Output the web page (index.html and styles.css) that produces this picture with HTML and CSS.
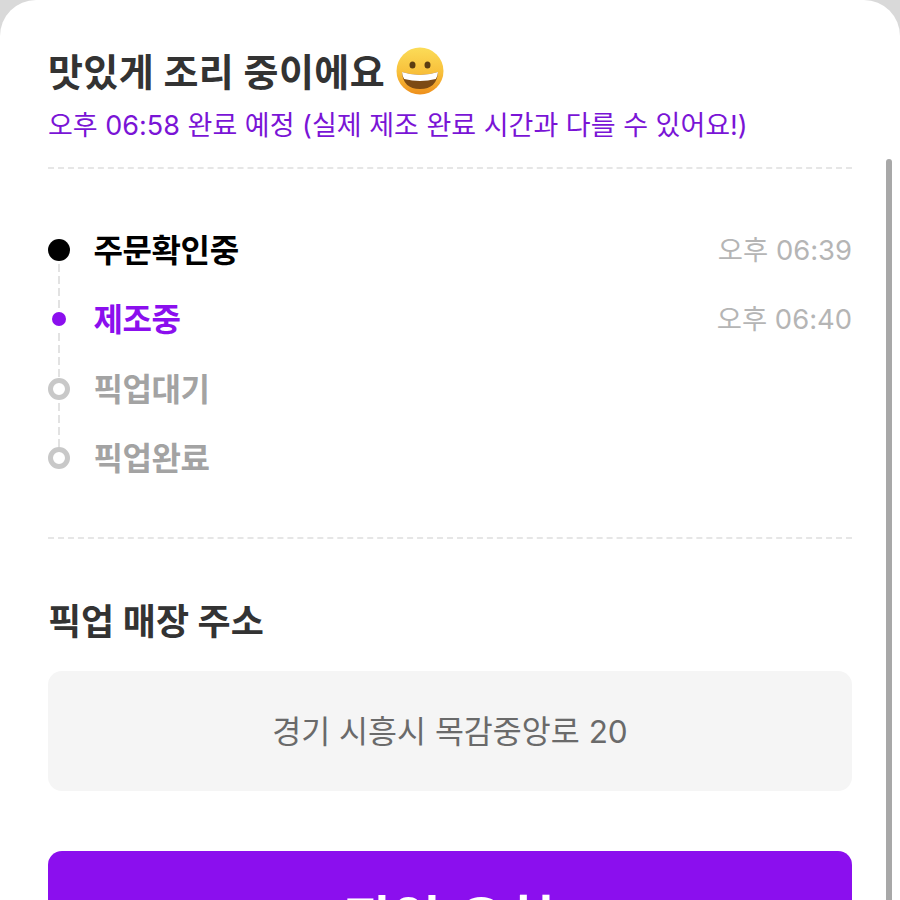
FILE: index.html
```html
<!DOCTYPE html>
<html lang="ko">
<head>
    <meta charset="UTF-8"/>
    <title>주문 상태</title>
    <link rel="stylesheet" href="styles.css">
</head>
<body>
<div class="sheet">
    <div class="scrollbar"></div>

    <h2 class="title">
        맛있게 조리 중이에요
        <svg class="emoji" viewBox="0 0 48 48" aria-hidden="true">
            <defs>
                <linearGradient id="face" x1="0" y1="0" x2="0" y2="1">
                    <stop offset="0" stop-color="#fbdc58"/>
                    <stop offset="0.55" stop-color="#f8bf3a"/>
                    <stop offset="1" stop-color="#ee8f1c"/>
                </linearGradient>
            </defs>
            <circle cx="24" cy="24" r="23.5" fill="url(#face)"/>
            <ellipse cx="16.5" cy="18" rx="3" ry="3.6" fill="#5b3d12"/>
            <ellipse cx="31.5" cy="18" rx="3" ry="3.6" fill="#5b3d12"/>
            <path d="M6 25 Q24 31 42 25 Q41 42 24 42 Q7 42 6 25 Z" fill="#7c4a14"/>
            <path d="M6 25 Q24 31 42 25 Q41.6 29.5 39.8 32 Q24 36 8.2 32 Q6.4 29.5 6 25 Z" fill="#fff"/>
        </svg>
    </h2>
    <p class="eta">오후 06:58 완료 예정 (실제 제조 완료 시간과 다를 수 있어요!)</p>

    <hr class="divider"/>

    <ul class="steps">
        <li class="step step-done">
            <span class="dot"></span>
            <span class="step-name">주문확인중</span>
            <span class="step-time">오후 06:39</span>
        </li>
        <li class="step step-current">
            <span class="dot"></span>
            <span class="step-name">제조중</span>
            <span class="step-time">오후 06:40</span>
        </li>
        <li class="step">
            <span class="dot"></span>
            <span class="step-name">픽업대기</span>
        </li>
        <li class="step">
            <span class="dot"></span>
            <span class="step-name">픽업완료</span>
        </li>
    </ul>

    <hr class="divider"/>

    <h3 class="section-title">픽업 매장 주소</h3>
    <div class="address">경기 시흥시 목감중앙로 20</div>

    <button class="confirm" type="button">픽업 요청</button>
</div>
</body>
</html>
```

FILE: styles.css
```css
html, body {
    height: 100%;
    overflow: hidden;
}

body {
    margin: 0;
    background-color: #d9d9d9;
    font-family: Inter, "Noto Sans CJK KR", "Noto Sans", sans-serif;
}

.sheet {
    position: relative;
    box-sizing: border-box;
    height: 900px;
    padding: 43px 48px 0;
    background-color: white;
    border-radius: 36px 36px 0 0;
    overflow: hidden;
}

.scrollbar {
    position: absolute;
    top: 159px;
    right: 8px;
    bottom: 0;
    width: 6px;
    background-color: #a8a8a8;
    border-radius: 3px 3px 0 0;
}

.title {
    display: flex;
    align-items: center;
    gap: 11px;
    margin: 0;
    height: 52px;
    font-size: 38px;
    font-weight: 700;
    letter-spacing: 0.4px;
    color: #333;
}

.emoji {
    width: 48px;
    height: 48px;
    margin-top: 4px;
}

.eta {
    margin: 14px 0 0;
    height: 34px;
    font-size: 27px;
    line-height: 34px;
    color: #7a14d6;
}

.divider {
    margin: 24px 0 0;
    border: none;
    border-top: 2px dashed #e6e6e6;
}

.steps {
    margin: 0;
    padding: 46px 0 20px;
    list-style: none;
}

.step {
    position: relative;
    display: flex;
    align-items: center;
    height: 69.5px;
    font-size: 32px;
    font-weight: 700;
    color: #a3a3a3;
}

.step + .step::before {
    content: "";
    position: absolute;
    left: 10px;
    top: -21px;
    width: 2px;
    height: 46px;
    background: repeating-linear-gradient(#e2e2e2 0 8px, transparent 8px 12px);
}

.dot {
    box-sizing: border-box;
    flex: none;
    width: 22px;
    height: 22px;
    margin-right: 23.5px;
    border: 5px solid #c8c8c8;
    border-radius: 50%;
    background-color: white;
    position: relative;
}

.step-done {
    color: black;
}

.step-done .dot {
    border: none;
    background-color: black;
}

.step-current {
    color: #8b0fee;
}

.step-current .dot {
    width: 14px;
    height: 14px;
    margin: 0 27.5px 0 4px;
    border: none;
    background-color: #8b0fee;
}

.step-name {
    margin-bottom: 4px;
    letter-spacing: -0.4px;
}

.step-time {
    margin-left: auto;
    margin-bottom: 4px;
    font-size: 27.4px;
    font-weight: 400;
    color: #b5b5b5;
}

.section-title {
    margin: 60px 0 0;
    font-size: 36px;
    line-height: 46px;
    font-weight: 700;
    color: #333;
}

.address {
    margin-top: 26px;
    height: 120px;
    line-height: 122px;
    text-align: center;
    font-size: 31.5px;
    color: #6a6a6a;
    background-color: #f5f5f5;
    border-radius: 14px;
}

.confirm {
    display: block;
    width: 100%;
    height: 130px;
    margin-top: 60px;
    border: none;
    border-radius: 14px;
    background-color: #8b0fee;
    color: white;
    font-family: inherit;
    font-size: 52px;
    font-weight: 700;
    letter-spacing: 2px;
}
```
